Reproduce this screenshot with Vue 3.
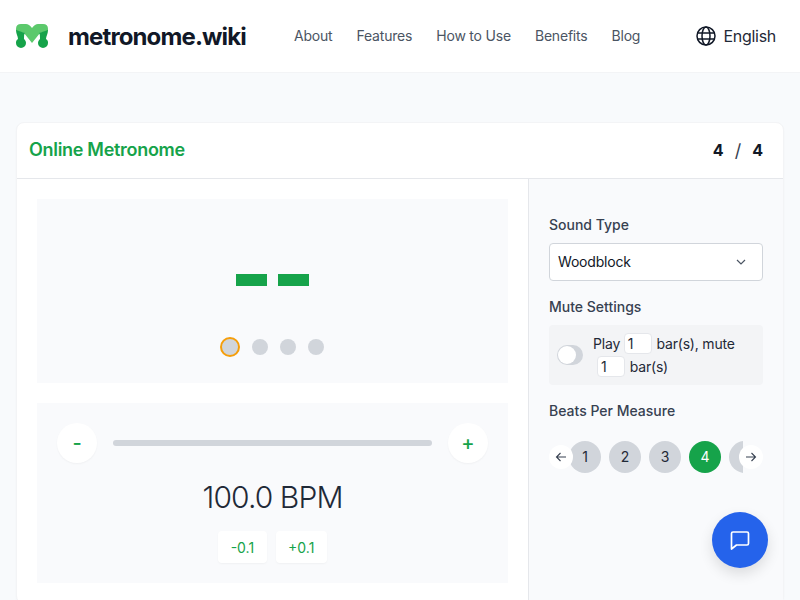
<script setup>
const navLinks = ['About', 'Features', 'How to Use', 'Benefits', 'Blog']
const beats = [1, 2, 3, 4, 5]
const dots = [0, 1, 2, 3]
</script>

<template>
  <div class="page">
    <header class="topbar">
      <div class="brand">
        <svg class="logo" width="34" height="26" viewBox="0 0 34 26">
          <path d="M6 1H11Q14 1 17 5Q20 1 23 1H28Q33 1 33 6V8L25 10L17 20L9 10L1 8V6Q1 1 6 1Z" fill="#5cc96c" />
          <path d="M1 7C1 11 3 13 3 16C1 17 1 19 1 20A5 5 0 0 0 11 20C11 18 10 17 9 16C9 13 9 11 10 10Z" fill="#16a34a" />
          <path d="M33 7C33 11 31 13 31 16C33 17 33 19 33 20A5 5 0 0 1 23 20C23 18 24 17 25 16C25 13 25 11 24 10Z" fill="#16a34a" />
        </svg>
        <span class="brand-name">metronome.wiki</span>
      </div>
      <nav class="nav">
        <a v-for="link in navLinks" :key="link">{{ link }}</a>
      </nav>
      <div class="lang">
        <svg width="20" height="20" viewBox="0 0 20 20" fill="none" stroke="#111827" stroke-width="1.5">
          <circle cx="10" cy="10" r="9" />
          <ellipse cx="10" cy="10" rx="4" ry="9" />
          <path d="M1.5 7h17M1.5 13h17" />
        </svg>
        <span>English</span>
      </div>
    </header>

    <main class="content">
      <section class="card">
        <div class="card-head">
          <h1>Online Metronome</h1>
          <div class="signature"><b>4</b><span>/</span><b>4</b></div>
        </div>
        <div class="card-body">
          <div class="left">
            <div class="display">
              <div class="digits">
                <i></i>
                <i></i>
              </div>
              <div class="dots">
                <span v-for="d in dots" :key="d" class="dot" :class="{ active: d === 0 }"></span>
              </div>
            </div>
            <div class="tempo">
              <div class="slider-row">
                <button class="round">-</button>
                <div class="track"></div>
                <button class="round">+</button>
              </div>
              <div class="bpm">100.0 BPM</div>
              <div class="fine">
                <button>-0.1</button>
                <button>+0.1</button>
              </div>
            </div>
          </div>
          <aside class="right">
            <div class="label">Sound Type</div>
            <div class="select">
              <span>Woodblock</span>
              <svg width="10" height="6" viewBox="0 0 10 6" fill="none" stroke="#4b5563" stroke-width="1.2">
                <path d="M1 1l4 4 4-4" />
              </svg>
            </div>
            <div class="label">Mute Settings</div>
            <div class="mute">
              <div class="toggle"><span></span></div>
              <div class="mute-text">
                Play <span class="num">1</span> bar(s), mute
                <span class="num second">1</span> bar(s)
              </div>
            </div>
            <div class="label">Beats Per Measure</div>
            <div class="beats">
              <button class="arrow left-arrow">
                <svg width="12" height="12" viewBox="0 0 12 12" fill="none" stroke="#374151" stroke-width="1.1">
                  <path d="M11 6H1.5M5.5 2L1.5 6l4 4" />
                </svg>
              </button>
              <div class="beat-strip">
                <span v-for="b in beats" :key="b" class="beat" :class="{ on: b === 4 }">{{ b }}</span>
              </div>
              <button class="arrow right-arrow">
                <svg width="12" height="12" viewBox="0 0 12 12" fill="none" stroke="#374151" stroke-width="1.1">
                  <path d="M1 6h9.5M6.5 2l4 4-4 4" />
                </svg>
              </button>
            </div>
          </aside>
        </div>
      </section>
    </main>

    <button class="chat">
      <svg width="24" height="24" viewBox="0 0 24 24" fill="none" stroke="#fff" stroke-width="1.7" stroke-linejoin="round">
        <path d="M5 4h14a1.5 1.5 0 0 1 1.5 1.5v10a1.5 1.5 0 0 1-1.5 1.5H8.5l-5 4V5.5A1.5 1.5 0 0 1 5 4z" />
      </svg>
    </button>
  </div>
</template>

<style>
html, body {
  margin: 0;
  overflow: hidden;
}
</style>

<style scoped>
.page {
  width: 800px;
  height: 600px;
  overflow: hidden;
  background: #f8fafc;
  font-family: Inter, "Liberation Sans", sans-serif;
  color: #111827;
  position: relative;
}
.topbar {
  height: 73px;
  background: #fff;
  border-bottom: 1px solid #f3f4f6;
  box-sizing: border-box;
  display: flex;
  align-items: center;
  padding: 0 24px 0 15px;
}
.brand {
  display: flex;
  align-items: center;
  gap: 19px;
  width: 279px;
}
.logo {
  flex: none;
}
.brand-name {
  font-size: 24px;
  font-weight: 700;
  letter-spacing: -0.87px;
}
.nav {
  display: flex;
  gap: 24px;
  padding-bottom: 1px;
  font-size: 14px;
  letter-spacing: -0.2px;
  color: #4b5563;
}
.lang {
  margin-left: auto;
  display: flex;
  align-items: center;
  gap: 8px;
  font-size: 16px;
  letter-spacing: -0.3px;
  color: #1f2937;
}
.content {
  padding: 49px 16px 0;
}
.card {
  background: #fff;
  border: 1px solid #f3f4f6;
  border-radius: 8px;
  box-shadow: 0 1px 2px rgba(0, 0, 0, 0.03);
}
.card-head {
  height: 56px;
  box-sizing: border-box;
  border-bottom: 1px solid #e5e7eb;
  display: flex;
  align-items: center;
  justify-content: space-between;
  padding: 0 20px 0 12px;
}
h1 {
  margin: 0 0 2px;
  font-size: 18px;
  font-weight: 600;
  letter-spacing: -0.3px;
  color: #16a34a;
}
.signature {
  display: flex;
  gap: 11px;
  font-size: 16px;
}
.signature b {
  font-weight: 700;
}
.signature span {
  font-size: 18px;
  color: #374151;
}
.card-body {
  display: flex;
}
.left {
  width: 512px;
  box-sizing: border-box;
  padding: 20px;
  display: flex;
  flex-direction: column;
  gap: 20px;
  border-right: 1px solid #e5e7eb;
}
.display {
  height: 184px;
  background: #f9fafc;
  display: flex;
  flex-direction: column;
  align-items: center;
}
.digits {
  display: flex;
  gap: 11px;
  margin-top: 75px;
}
.digits i {
  width: 31px;
  height: 12px;
  background: #16a34a;
}
.dots {
  display: flex;
  align-items: center;
  gap: 12px;
  margin-top: 51px;
  margin-right: 2px;
}
.dot {
  width: 16px;
  height: 16px;
  border-radius: 50%;
  background: #d1d5db;
}
.dot.active {
  box-sizing: content-box;
  border: 2px solid #f59e0b;
}
.tempo {
  height: 180px;
  background: #f9fafc;
  padding: 20px;
  box-sizing: border-box;
  display: flex;
  flex-direction: column;
  align-items: center;
}
.slider-row {
  width: 100%;
  display: flex;
  align-items: center;
  gap: 16px;
}
.round {
  width: 40px;
  height: 40px;
  border: 0;
  border-radius: 50%;
  background: #fff;
  color: #16a34a;
  font: 500 20px Inter, "Liberation Sans", sans-serif;
  box-shadow: 0 1px 2px rgba(0, 0, 0, 0.04);
}
.track {
  flex: 1;
  height: 6px;
  border-radius: 3px;
  background: #d1d5db;
}
.bpm {
  margin-top: 16px;
  font-size: 30px;
  font-weight: 300;
  letter-spacing: -0.9px;
  line-height: 36px;
  color: #1f2937;
}
.fine {
  display: flex;
  gap: 9px;
  margin-top: 16px;
}
.fine button {
  height: 32px;
  padding: 0 12.5px;
  border: 0;
  border-radius: 4px;
  background: #fff;
  color: #16a34a;
  font: 400 14px Inter, "Liberation Sans", sans-serif;
  box-shadow: 0 1px 2px rgba(0, 0, 0, 0.04);
}
.right {
  flex: 1;
  background: #f9fafc;
  padding: 20px;
  min-width: 0;
}
.label {
  font-size: 14px;
  font-weight: 500;
  line-height: 20px;
  color: #374151;
  margin-top: 16px;
  margin-bottom: 8px;
}
.select {
  height: 38px;
  box-sizing: border-box;
  background: #fff;
  border: 1px solid #d1d5db;
  border-radius: 4px;
  padding: 0 16px 1px 8px;
  display: flex;
  align-items: center;
  justify-content: space-between;
  font-size: 14px;
  letter-spacing: -0.2px;
}
.mute {
  background: #f3f4f6;
  border-radius: 4px;
  height: 60px;
  box-sizing: border-box;
  padding: 0 8px;
  display: flex;
  align-items: center;
  gap: 10px;
}
.toggle {
  width: 26px;
  height: 20px;
  flex: none;
  background: #d1d5db;
  border-radius: 10px;
  position: relative;
}
.toggle span {
  position: absolute;
  left: 1px;
  top: 1px;
  width: 18px;
  height: 18px;
  border-radius: 50%;
  background: #fff;
}
.mute-text {
  font-size: 14px;
  letter-spacing: -0.2px;
  line-height: 23px;
  color: #1f2937;
}
.num {
  display: inline-block;
  width: 28px;
  height: 21px;
  line-height: 19px;
  box-sizing: border-box;
  padding-left: 3px;
  margin: 1px 1px 0 0;
  background: #fff;
  border: 1px solid #e5e7eb;
  border-radius: 4px;
  vertical-align: top;
}
.num.second {
  margin-left: 4px;
}
.beats {
  margin-top: 20px;
  position: relative;
  height: 32px;
  padding: 0 12px 0 20px;
}
.beat-strip {
  display: flex;
  gap: 8px;
  overflow: hidden;
  width: 174px;
}
.beat {
  flex: none;
  width: 32px;
  height: 32px;
  border-radius: 50%;
  background: #d1d5db;
  font-size: 14px;
  line-height: 32px;
  text-align: center;
  color: #1f2937;
}
.beat.on {
  background: #16a34a;
  color: #fff;
}
.arrow {
  position: absolute;
  top: 4px;
  width: 24px;
  height: 24px;
  padding: 0;
  border: 0;
  border-radius: 50%;
  background: #fff;
  display: flex;
  align-items: center;
  justify-content: center;
  z-index: 1;
}
.left-arrow {
  left: 0;
}
.right-arrow {
  right: 0;
}
.chat {
  position: absolute;
  left: 712px;
  top: 512px;
  width: 56px;
  height: 56px;
  padding: 0;
  border: 0;
  border-radius: 50%;
  background: #2563eb;
  display: flex;
  align-items: center;
  justify-content: center;
  box-shadow: 0 6px 14px rgba(0, 0, 0, 0.12);
}
</style>
